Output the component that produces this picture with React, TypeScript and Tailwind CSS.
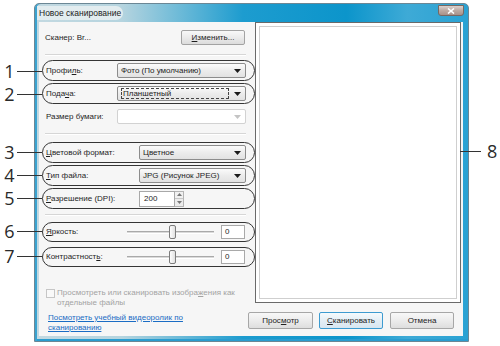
import React from "react";

const U = ({ children }: { children: React.ReactNode }) => <span className="underline underline-offset-[1px]">{children}</span>;

const Arrow = ({ light }: { light?: boolean }) => (
  <svg width="7" height="4" viewBox="0 0 7 4" className="shrink-0">
    <path d="M0 0h7L3.5 4z" fill={light ? "#c4c4c4" : "#1a1a1a"} />
  </svg>
);

function Combo({
  w,
  children,
  disabled,
  focus,
}: {
  w: string;
  children?: React.ReactNode;
  disabled?: boolean;
  focus?: boolean;
}) {
  return (
    <div
      className={`${w} h-[15px] flex items-center justify-between rounded-[2px] border pl-[3px] pr-[4px] ${
        disabled
          ? "border-[#d2d2d2] bg-white"
          : "border-[#8c8c8c] bg-[linear-gradient(#fbfbfb,#ececec_50%,#e2e2e2)]"
      }`}
    >
      {focus ? (
        <span className="h-[11px] flex-1 mr-[5px] border border-dashed border-[#444] leading-[9px] pl-[1px]">
          {children}
        </span>
      ) : (
        <span className="leading-none">{children}</span>
      )}
      <Arrow light={disabled} />
    </div>
  );
}

function Row({ ring = true, h = "h-[21px]", children }: { ring?: boolean; h?: string; children: React.ReactNode }) {
  return (
    <div
      className={`ml-[3px] w-[213px] ${h} shrink-0 rounded-full border-[1.5px] ${
        ring ? "border-[#353535]" : "border-transparent"
      } flex items-center pl-[3px]`}
    >
      {children}
    </div>
  );
}

function Slider() {
  return (
    <div className="relative w-[87px] h-[16px] flex items-center">
      <div className="w-full h-[3px] border-t border-[#a9a9a9] border-b border-b-white bg-[#dadada]" />
      <div className="absolute left-[42px] top-[1px] w-[7px] h-[14px] rounded-[2px] border border-[#7c7c7c] bg-[linear-gradient(90deg,#fdfdfd,#e1e1e1)]" />
    </div>
  );
}

function Sep({ mt }: { mt: string }) {
  return <div className={`${mt} ml-[6px] mr-[2px] h-[2px] border-t border-[#d6d6d6] border-b border-b-white shrink-0`} />;
}

function Btn({ w, children, primary }: { w: string; children: React.ReactNode; primary?: boolean }) {
  return (
    <div
      className={`${w} h-[17px] flex items-center justify-center rounded-[2px] border ${
        primary ? "border-[#3d9bd0] bg-[linear-gradient(#f5fafd,#e4eef5_50%,#d8e6f0)]" : "border-[#a7a7a7] bg-[linear-gradient(#f8f8f8,#ececec_50%,#dedede)]"
      } text-[#222]`}
    >
      {children}
    </div>
  );
}

function Callout({ pos, n }: { pos: string; n: string }) {
  return (
    <div className={`absolute ${pos} flex items-center h-[20px]`}>
      <span className="w-[15px] text-center text-[18px] leading-none text-[#2a2a2a] font-['Open_Sans',sans-serif]">{n}</span>
      <div className="w-[25px] h-px bg-[#333]" />
    </div>
  );
}

export default function App() {
  return (
    <div className="relative w-[500px] h-[346px] bg-white overflow-hidden whitespace-nowrap pl-[34px] pt-[3px] font-['Liberation_Sans',Arial,sans-serif] text-[8px] text-[#1e1e1e]">
      {/* window */}
      <div className="w-[435px] h-[339px] flex flex-col rounded-t-[5px] border border-[#6b8795] shadow-[inset_2px_0_0_#3aa3d0,inset_0_-2px_0_#2a9dd0] bg-[linear-gradient(90deg,#c3d9e1_0%,#b5d4df_20%,#6fbbd8_33%,#1d9ccf_48%,#0c95cb_72%,#3eaad6_86%,#2aa2d3_100%)]">
        {/* title bar */}
        <div className="h-[18px] shrink-0 flex justify-between">
          <div className="ml-[2px] mt-[2px] h-[14px] w-[86px] rounded-r-full rounded-l-[4px] bg-[#e2ecef] pl-[2px] flex items-center text-[8.5px] text-[#1b1b1b]">
            Новое сканирование
          </div>
          <div className="mr-[4px] mt-[1px] w-[26px] h-[11px] rounded-b-[3px] border border-[#776862] bg-[linear-gradient(#ddd2ce,#bcaaa3_50%,#a89189)] flex items-center justify-center">
            <svg width="8" height="6" viewBox="0 0 8 6">
              <path d="M1 0.5L7 5.5M7 0.5L1 5.5" stroke="#fff" strokeWidth="1.6" />
            </svg>
          </div>
        </div>
        {/* interior */}
        <div className="ml-[4px] mr-[5px] mb-[5px] flex-1 bg-[#f6f6f6] flex">
          {/* left column */}
          <div className="w-[209px] shrink-0 flex flex-col">
            <div className="mt-[8px] h-[15px] flex items-center justify-between pl-[6px] pr-[3px]">
              <span>Сканер: Br...</span>
              <div className="w-[64px] h-[15px] flex items-center justify-center rounded-[2px] border border-[#a3a3a3] bg-[linear-gradient(#f8f8f8,#ebebeb_50%,#dcdcdc)]">
                <U>И</U>зменить...
              </div>
            </div>
            <Sep mt="mt-[9px]" />
            <div className="mt-[4px]">
              <Row>
                <span className="w-[71px]">Профи<U>л</U>ь:</span>
                <Combo w="w-[129px]">Фото (По умолчанию)</Combo>
              </Row>
            </div>
            <div className="mt-[2px]">
              <Row>
                <span className="w-[71px]">Пода<U>ч</U>а:</span>
                <Combo w="w-[129px]" focus>
                  Планшетный
                </Combo>
              </Row>
            </div>
            <div className="mt-[2px]">
              <Row ring={false}>
                <span className="w-[71px]">Размер бумаги:</span>
                <Combo w="w-[129px]" disabled />
              </Row>
            </div>
            <Sep mt="mt-[6px]" />
            <div className="mt-[7px]">
              <Row>
                <span className="w-[93px]"><U>Ц</U>ветовой формат:</span>
                <Combo w="w-[107px]">Цветное</Combo>
              </Row>
            </div>
            <div className="mt-[2px]">
              <Row>
                <span className="w-[93px]"><U>Т</U>ип файла:</span>
                <Combo w="w-[107px]">JPG (Рисунок JPEG)</Combo>
              </Row>
            </div>
            <div className="mt-[2px]">
              <Row>
                <span className="w-[93px]"><U>Р</U>азрешение (DPI):</span>
                <div className="flex h-[16px]">
                  <div className="w-[36px] border border-[#a8a8a8] bg-white pl-[4px] flex items-center">200</div>
                  <div className="w-[9px] flex flex-col border border-l-0 border-[#b5b5b5]">
                    <div className="flex-1 flex items-center justify-center bg-[#f1f1f1] border-b border-[#c8c8c8]">
                      <svg width="5" height="3" viewBox="0 0 5 3"><path d="M0 3h5L2.5 0z" fill="#777" /></svg>
                    </div>
                    <div className="flex-1 flex items-center justify-center bg-[#ececec]">
                      <svg width="5" height="3" viewBox="0 0 5 3"><path d="M0 0h5L2.5 3z" fill="#777" /></svg>
                    </div>
                  </div>
                </div>
              </Row>
            </div>
            <Sep mt="mt-[5px]" />
            <div className="mt-[6px]">
              <Row h="h-[20px]">
                <span className="w-[81px]"><U>Я</U>ркость:</span>
                <Slider />
                <div className="ml-[7px] w-[24px] h-[14px] border border-[#a9a9a9] bg-white pl-[3px] flex items-center">0</div>
              </Row>
            </div>
            <div className="mt-[5px]">
              <Row h="h-[20px]">
                <span className="w-[81px]">Контрастност<U>ь</U>:</span>
                <Slider />
                <div className="ml-[7px] w-[24px] h-[14px] border border-[#a9a9a9] bg-white pl-[3px] flex items-center">0</div>
              </Row>
            </div>
            <div className="mt-[21px] pl-[7px] flex items-start text-[#a3a3a3]">
              <div className="mt-[1px] w-[9px] h-[9px] shrink-0 border border-[#c6c6c6] bg-[#f9f9f9]" />
              <div className="ml-[2px] leading-[9.5px]">
                Просмотреть или сканировать изобра<U>ж</U>ения как
                <br />
                отдельные файлы
              </div>
            </div>
            <div className="mt-[6px] pl-[9px] leading-[10px] text-[#1a6cc4] underline">
              Посмотреть учебный видеоролик по
              <br />
              сканированию
            </div>
          </div>
          {/* right column */}
          <div className="flex-1 flex flex-col">
            <div className="ml-[7px] mr-[2px] h-[281px] border border-[#6a6a6a] bg-white p-[3px]">
              <div className="h-full border border-[#cfcfcf] bg-white" />
            </div>
            <div className="mt-[9px] flex">
              <Btn w="w-[65px]">Прос<U>м</U>отр</Btn>
              <div className="ml-[6px]">
                <Btn w="w-[64px]" primary>
                  <U>С</U>канировать
                </Btn>
              </div>
              <div className="ml-[7px]">
                <Btn w="w-[64px]">Отмена</Btn>
              </div>
            </div>
          </div>
        </div>
      </div>

      {/* callouts */}
      <Callout pos="left-[2px] top-[61px]" n="1" />
      <Callout pos="left-[2px] top-[84px]" n="2" />
      <Callout pos="left-[2px] top-[142px]" n="3" />
      <Callout pos="left-[2px] top-[165px]" n="4" />
      <Callout pos="left-[2px] top-[188px]" n="5" />
      <Callout pos="left-[2px] top-[221px]" n="6" />
      <Callout pos="left-[2px] top-[246px]" n="7" />
      <div className="absolute left-[460px] top-[141px] flex items-center h-[20px]">
        <div className="w-[21px] h-px bg-[#333]" />
        <span className="ml-[6px] text-[18px] leading-none text-[#2a2a2a] font-['Open_Sans',sans-serif]">8</span>
      </div>
    </div>
  );
}
